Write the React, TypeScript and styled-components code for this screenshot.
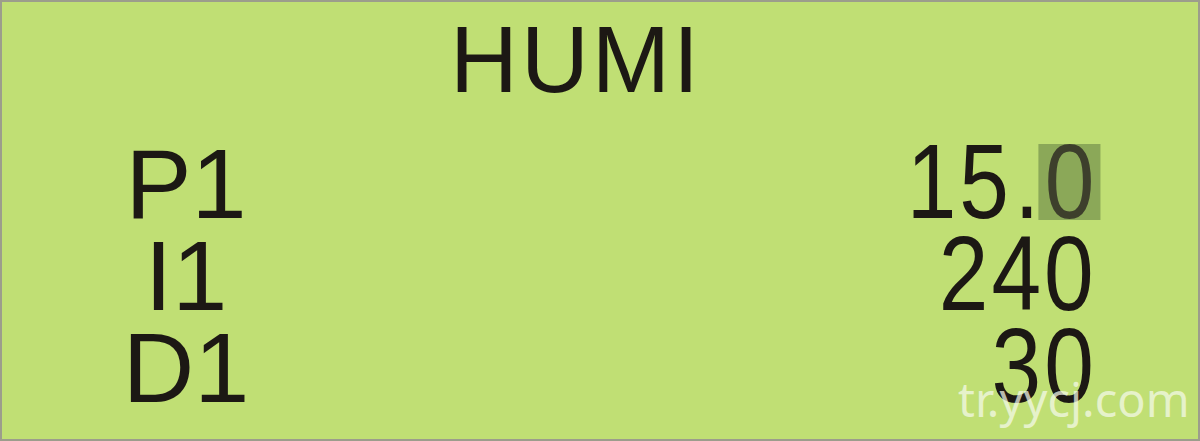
import React from "react";
import styled, { createGlobalStyle } from "styled-components";

const Global = createGlobalStyle`
  html, body {
    margin: 0;
    padding: 0;
    background: #c0df74;
  }
  * { box-sizing: border-box; }
`;

const Screen = styled.div`
  position: relative;
  width: 1200px;
  height: 441px;
  background: #c0df74;
  border: 2px solid #9c9d8c;
  padding: 11px 101px 0 0;
  overflow: hidden;
  font-family: "Liberation Sans", Arial, sans-serif;
  color: #1c1814;
`;

const Title = styled.div`
  padding-left: 448px;
  font-size: 94px;
  line-height: 94px;
  letter-spacing: 3px;
  white-space: nowrap;
`;

const Params = styled.div`
  margin-top: 31px;
  display: flex;
  flex-direction: column;
`;

const Row = styled.div`
  display: flex;
  align-items: baseline;
  height: 92px;
`;

const Label = styled.div`
  width: 368px;
  text-align: center;
  font-size: 99px;
  line-height: 92px;
  white-space: nowrap;
`;

const ValueCell = styled.div`
  flex: 1;
  display: flex;
  justify-content: flex-end;
  align-items: baseline;
`;

const Value = styled.span`
  display: inline-block;
  font-size: 105px;
  line-height: 88px;
  letter-spacing: 3.5px;
  white-space: nowrap;
  transform: scaleX(0.85);
  transform-origin: right center;
`;

const Dot = styled.span`
  padding: 0 3px;
`;

const Cursor = styled.span`
  display: inline-block;
  line-height: 0.72em;
  height: 0.72em;
  padding: 0 4px 0 7px;
  margin: 0 -4px 0 -7px;
  background: #8ba858;
  color: #3d3f2c;
`;

const Watermark = styled.div`
  position: absolute;
  left: 956px;
  top: 374px;
  font-family: "Noto Sans", "Open Sans", sans-serif;
  font-size: 47px;
  line-height: 47px;
  color: rgba(246, 250, 236, 0.72);
  white-space: nowrap;
`;

type Param = { name: string; int: string; frac?: string };

const params: Param[] = [
  { name: "P1", int: "15", frac: "0" },
  { name: "I1", int: "240" },
  { name: "D1", int: "30" },
];

export default function App() {
  return (
    <>
      <Global />
      <Screen>
        <Title>HUMI</Title>
        <Params>
          {params.map((p) => (
            <Row key={p.name}>
              <Label>{p.name}</Label>
              <ValueCell>
                <Value>
                  {p.int}
                  {p.frac !== undefined && (
                    <>
                      <Dot>.</Dot>
                      <Cursor>{p.frac}</Cursor>
                    </>
                  )}
                </Value>
              </ValueCell>
            </Row>
          ))}
        </Params>
        <Watermark>tr.yycj.com</Watermark>
      </Screen>
    </>
  );
}
